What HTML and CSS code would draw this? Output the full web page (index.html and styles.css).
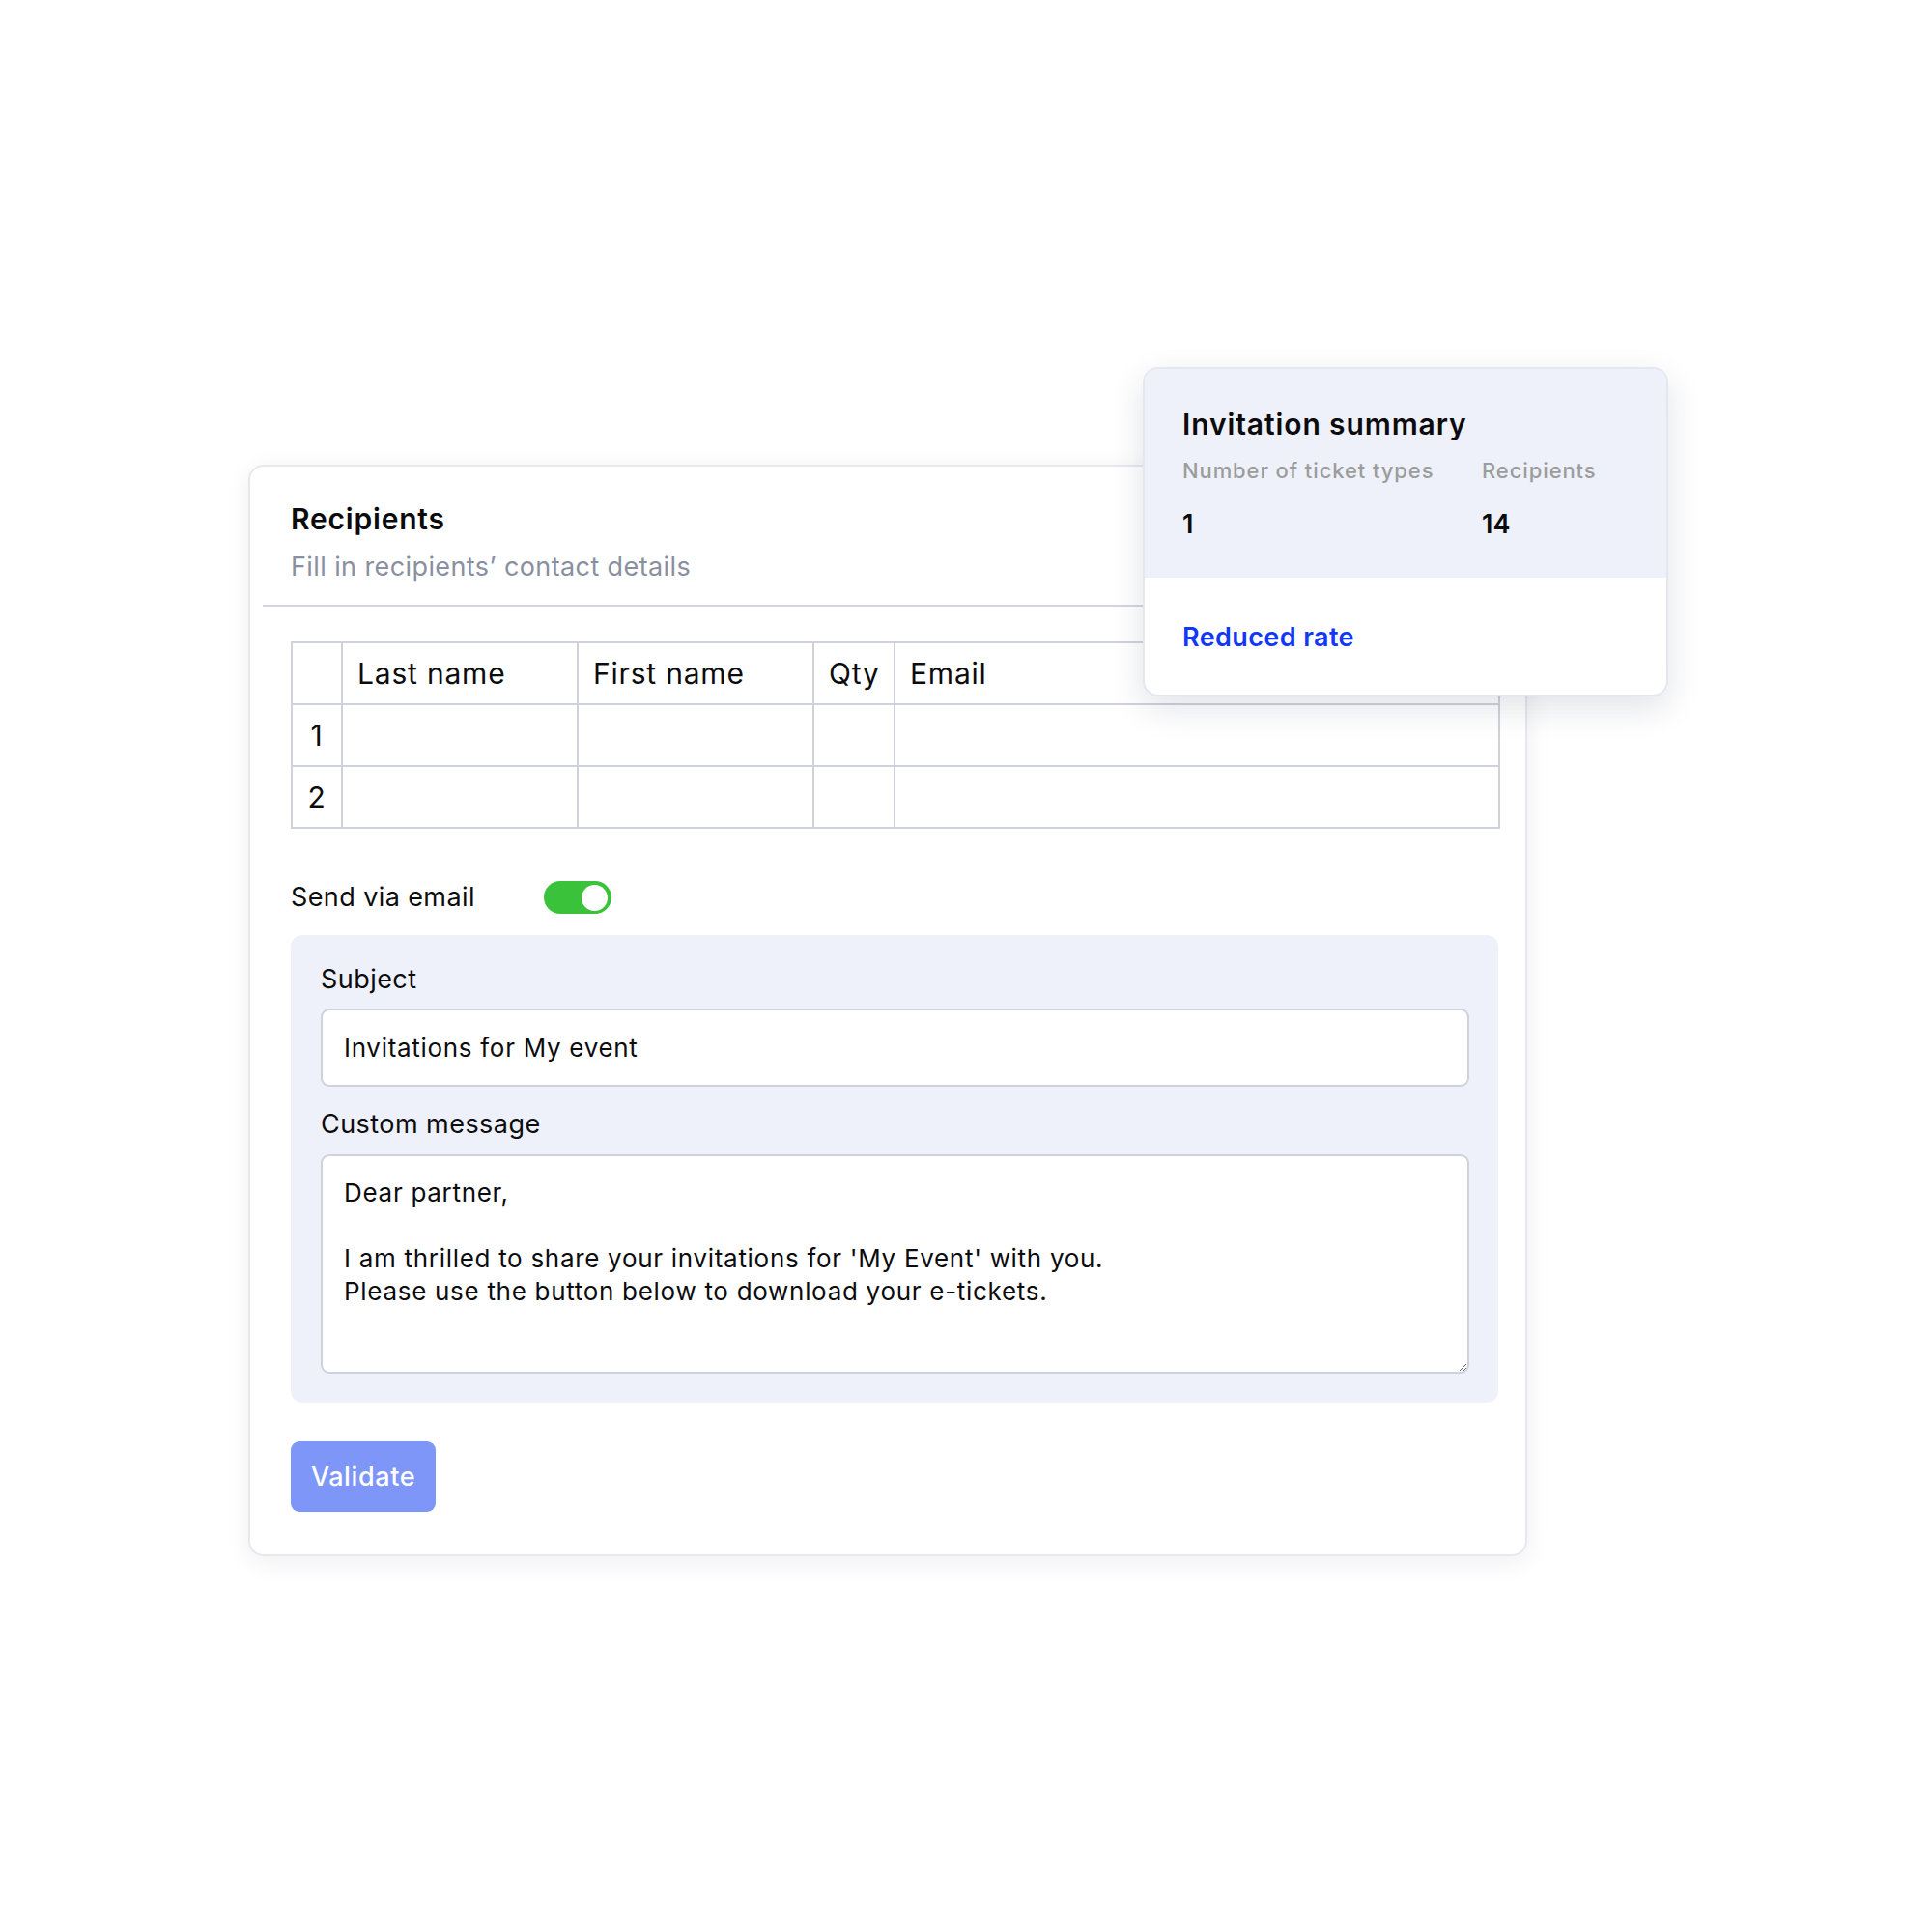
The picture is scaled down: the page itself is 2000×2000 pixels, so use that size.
FILE: index.html
```html
<!DOCTYPE html>
<html lang="en">
<head>
<meta charset="utf-8">
<title>Recipients</title>
<link rel="stylesheet" href="styles.css">
</head>
<body>
<div class="stage">
  <section class="card">
    <header class="card-head">
      <h2 class="card-title">Recipients</h2>
      <p class="card-sub">Fill in recipients’ contact details</p>
    </header>
    <div class="card-body">
      <table class="grid">
        <colgroup>
          <col class="c-num"><col class="c-last"><col class="c-first"><col class="c-qty"><col class="c-email">
        </colgroup>
        <thead>
          <tr><th></th><th>Last name</th><th>First name</th><th>Qty</th><th>Email</th></tr>
        </thead>
        <tbody>
          <tr><td class="num">1</td><td></td><td></td><td></td><td></td></tr>
          <tr><td class="num">2</td><td></td><td></td><td></td><td></td></tr>
        </tbody>
      </table>

      <div class="toggle-row">
        <span class="toggle-label">Send via email</span>
        <span class="toggle"><span class="knob"></span></span>
      </div>

      <div class="panel">
        <label class="field-label" for="subject">Subject</label>
        <input class="field-input" id="subject" type="text" value="Invitations for My event">
        <label class="field-label field-label-2" for="msg">Custom message</label>
        <textarea class="field-area" id="msg">Dear partner,

I am thrilled to share your invitations for 'My Event' with you.
Please use the button below to download your e-tickets.</textarea>
      </div>

      <button class="btn" type="button">Validate</button>
    </div>
  </section>

  <aside class="summary">
    <div class="summary-top">
      <h3 class="summary-title">Invitation summary</h3>
      <div class="summary-stats">
        <span class="stat-label">Number of ticket types</span>
        <span class="stat-label">Recipients</span>
        <span class="stat-value">1</span>
        <span class="stat-value">14</span>
      </div>
    </div>
    <div class="summary-bottom">
      <span class="summary-link">Reduced rate</span>
    </div>
  </aside>
</div>
</body>
</html>
```

FILE: styles.css
```css
* { box-sizing: border-box; }

html, body {
  margin: 0;
  background: #ffffff;
}

body {
  font-family: Inter, "Noto Sans", "Liberation Sans", sans-serif;
  color: #0c0c0e;
}

.stage {
  position: relative;
  width: 2000px;
  height: 2000px;
  padding: 481px 0 0 257px;
}

/* ---------- main card ---------- */
.card {
  width: 1324px;
  border: 2px solid #e6e8ee;
  border-radius: 16px;
  background: #ffffff;
  box-shadow: 0 6px 26px rgba(25, 35, 70, 0.07);
  padding: 36px 0 44px 0;
}

.card-head {
  margin: 0 12px 0 13px;
  padding: 0 29px 22px 29px;
  border-bottom: 2px solid #d3d6df;
}

.card-title {
  margin: 0;
  font-size: 30px;
  line-height: 36px;
  font-weight: 600;
  letter-spacing: 0.8px;
  color: #0b0b0d;
}

.card-sub {
  margin: 15px 0 0 0;
  font-size: 27px;
  line-height: 34px;
  font-weight: 400;
  letter-spacing: 0.4px;
  color: #8a8fa0;
}

.card-body {
  padding: 36px 28px 0 42px;
}

/* ---------- table ---------- */
.grid {
  width: 1250px;
  border-collapse: collapse;
  table-layout: fixed;
  border: 2px solid #cfd2dc;
}

.c-num { width: 52px; }
.c-last { width: 244px; }
.c-first { width: 244px; }
.c-qty { width: 84px; }
.c-email { width: 626px; }

.grid tr { height: 64px; }

.grid th,
.grid td {
  border: 2px solid #cfd2dc;
  padding: 0 0 0 15px;
  font-size: 30px;
  font-weight: 400;
  letter-spacing: 0.8px;
  text-align: left;
  vertical-align: middle;
  color: #0c0c0e;
}

.grid td.num {
  padding: 0;
  text-align: center;
}

/* ---------- toggle ---------- */
.toggle-row {
  display: grid;
  grid-template-columns: 262px auto;
  align-items: center;
  margin-top: 54px;
  height: 34px;
}

.toggle-label {
  font-size: 27px;
  line-height: 34px;
  letter-spacing: 0.4px;
  color: #0c0c0e;
}

.toggle {
  position: relative;
  width: 70px;
  height: 34px;
  border-radius: 17px;
  background: #3bc23b;
}

.knob {
  position: absolute;
  right: 4px;
  top: 3.5px;
  width: 27px;
  height: 27px;
  border-radius: 50%;
  background: #ffffff;
}

/* ---------- grey panel ---------- */
.panel {
  display: flex;
  flex-direction: column;
  margin-top: 22px;
  width: 1250px;
  background: #eef1fa;
  border-radius: 12px;
  padding: 29px 30px 30px 31px;
}

.field-label {
  font-size: 27px;
  line-height: 34px;
  letter-spacing: 0.45px;
  color: #0c0c0e;
}

.field-label-2 {
  margin-top: 22px;
}

.field-input,
.field-area {
  display: block;
  width: 100%;
  margin-top: 13px;
  border: 2px solid #cfd2dc;
  border-radius: 9px;
  background: #ffffff;
  font-family: Inter, "Noto Sans", "Liberation Sans", sans-serif;
  font-size: 26px;
  letter-spacing: 0.7px;
  color: #0c0c0e;
  outline: none;
}

.field-input {
  height: 81px;
  padding: 0 22px;
}

.field-area {
  height: 227px;
  margin-top: 14px;
  padding: 21px 22px;
  line-height: 34px;
  resize: vertical;
  overflow: hidden;
}

/* ---------- button ---------- */
.btn {
  display: block;
  margin-top: 40px;
  width: 150px;
  height: 73px;
  border: none;
  border-radius: 9px;
  background: #7d96f7;
  color: #ffffff;
  font-family: Inter, "Noto Sans", "Liberation Sans", sans-serif;
  font-size: 27px;
  font-weight: 500;
  letter-spacing: 0.6px;
}

/* ---------- summary popover ---------- */
.summary {
  position: absolute;
  left: 1183px;
  top: 380px;
  width: 544px;
  border: 2px solid #e4e7ef;
  border-radius: 16px;
  background: #ffffff;
  overflow: hidden;
  box-shadow: 0 12px 34px rgba(25, 35, 70, 0.13);
}

.summary-top {
  background: #eef1fa;
  padding: 39px 30px 38px 39px;
}

.summary-title {
  margin: 0;
  font-size: 30px;
  line-height: 36px;
  font-weight: 600;
  letter-spacing: 0.9px;
  color: #0b0b0d;
}

.summary-stats {
  display: grid;
  grid-template-columns: 310px auto;
  row-gap: 25px;
  margin-top: 17px;
}

.stat-label {
  font-size: 22px;
  line-height: 27px;
  font-weight: 500;
  letter-spacing: 0.9px;
  color: #9c9c9c;
}

.stat-value {
  font-size: 27px;
  line-height: 34px;
  font-weight: 600;
  color: #0b0b0d;
}

.summary-bottom {
  padding: 45px 39px 42px 39px;
}

.summary-link {
  display: block;
  font-size: 27px;
  line-height: 34px;
  font-weight: 600;
  letter-spacing: 0.4px;
  color: #1238f5;
}
```
